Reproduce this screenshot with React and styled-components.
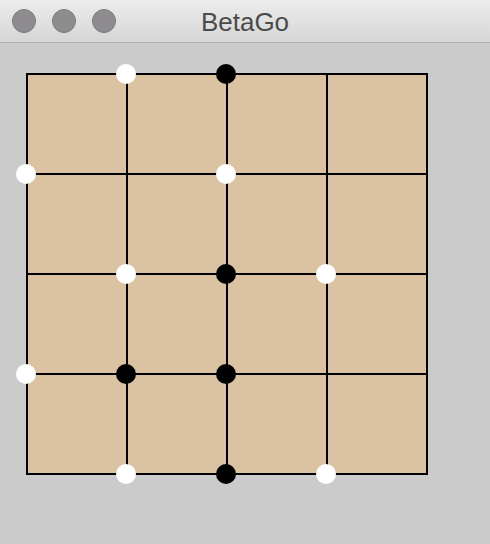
import React from 'react';
import styled, { createGlobalStyle } from 'styled-components';

const GlobalStyle = createGlobalStyle`
  html, body {
    margin: 0;
    padding: 0;
    background: #cbcbcb;
  }
  body {
    width: 490px;
    height: 544px;
    overflow: hidden;
    font-family: 'Liberation Sans', Arial, sans-serif;
  }
`;

const Window = styled.div`
  width: 490px;
  height: 544px;
  background: #cbcbcb;
  display: flex;
  flex-direction: column;
`;

const TitleBar = styled.div`
  position: relative;
  height: 42px;
  flex-shrink: 0;
  background: linear-gradient(#ececec, #d6d6d6);
  border-bottom: 1px solid #b1b1b1;
  display: flex;
  align-items: center;
  justify-content: center;
`;

const Lights = styled.div`
  position: absolute;
  left: 12px;
  top: 9px;
  display: flex;
  column-gap: 16px;
`;

const Light = styled.span`
  width: 22px;
  height: 22px;
  border-radius: 50%;
  background: #8e8c8f;
  border: 1px solid #7b797c;
`;

const Title = styled.h1`
  margin: 0;
  font-size: 26px;
  font-weight: normal;
  color: #4b4b4b;
  line-height: 1;
  padding-top: 1px;
`;

const Content = styled.div`
  padding: 30px 0 0 26px;
`;

const Board = styled.div`
  position: relative;
  width: 402px;
`;

const Grid = styled.div`
  display: grid;
  grid-template-columns: repeat(4, 100px);
  grid-template-rows: repeat(4, 100px);
  background: #dbc2a2;
  border-top: 2px solid #000;
  border-left: 2px solid #000;
`;

const Cell = styled.div`
  border-right: 2px solid #000;
  border-bottom: 2px solid #000;
`;

const Stone = styled.div`
  position: absolute;
  width: 20px;
  height: 20px;
  border-radius: 50%;
  background: ${(p) => (p.$color === 'black' ? '#000' : '#fff')};
`;

const stones = [
  [1, 0, 'white'], [2, 0, 'black'],
  [0, 1, 'white'], [2, 1, 'white'],
  [1, 2, 'white'], [2, 2, 'black'], [3, 2, 'white'],
  [0, 3, 'white'], [1, 3, 'black'], [2, 3, 'black'],
  [1, 4, 'white'], [2, 4, 'black'], [3, 4, 'white'],
];

const App = () => (
  <Window>
    <GlobalStyle />
    <TitleBar>
      <Lights>
        <Light />
        <Light />
        <Light />
      </Lights>
      <Title>BetaGo</Title>
    </TitleBar>
    <Content>
      <Board>
        <Grid>
          {Array.from({ length: 16 }, (_, i) => (
            <Cell key={i} />
          ))}
        </Grid>
        {stones.map(([col, row, color]) => (
          <Stone
            key={`${col}-${row}`}
            $color={color}
            style={{ left: col * 100 - 10, top: row * 100 - 9 }}
          />
        ))}
      </Board>
    </Content>
  </Window>
);

export default App;
